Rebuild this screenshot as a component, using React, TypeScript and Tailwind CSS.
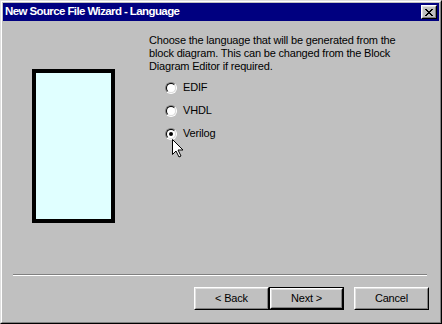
import React from 'react'

function Radio({ label, checked = false }: { label: string; checked?: boolean }) {
    return (
        <div className="flex items-center h-[23px]">
            <span className="w-[12px] h-[12px] rounded-full border border-t-[#808080] border-l-[#808080] border-r-white border-b-white flex">
                <span className="flex-1 rounded-full border border-t-black border-l-black border-r-[#dfdfdf] border-b-[#dfdfdf] bg-white flex items-center justify-center">
                    {checked && <span className="w-[4px] h-[4px] rounded-full bg-black" />}
                </span>
            </span>
            <span className="ml-[6px]">{label}</span>
        </div>
    )
}

function Button({ label, isDefault = false }: { label: string; isDefault?: boolean }) {
    const face = (
        <div className="flex-1 flex border border-t-white border-l-white border-r-black border-b-black">
            <div className="flex-1 flex items-center justify-center border border-t-[#dfdfdf] border-l-[#dfdfdf] border-r-[#808080] border-b-[#808080] bg-[#c0c0c0]">
                {label}
            </div>
        </div>
    )
    if (isDefault) {
        return <div className="w-[75px] h-[23px] flex border border-black">{face}</div>
    }
    return <div className="w-[75px] h-[23px] flex">{face}</div>
}

export default function App() {
    return (
        <div
            className="relative w-[442px] h-[324px] bg-[#c0c0c0] border border-t-[#dfdfdf] border-l-[#dfdfdf] border-r-black border-b-black text-[11px] tracking-[-0.18px] text-black"
            style={{ fontFamily: '"Liberation Sans", Arial, sans-serif' }}
        >
            <div className="h-full flex flex-col border border-t-white border-l-white border-r-[#808080] border-b-[#808080] p-[1px]">
                {/* Title bar */}
                <div className="h-[18px] bg-[#000080] flex items-center justify-between pl-[2px] pr-[2px]">
                    <span className="text-white font-bold text-[11.5px] tracking-[-0.6px] leading-none">New Source File Wizard - Language</span>
                    <div className="w-[16px] h-[14px] flex border border-t-white border-l-white border-r-black border-b-black">
                        <div className="flex-1 flex items-center justify-center border border-t-[#dfdfdf] border-l-[#dfdfdf] border-r-[#808080] border-b-[#808080] bg-[#c0c0c0]">
                            <svg width="8" height="7" viewBox="0 0 8 7">
                                <path d="M0 0h2v1h1v1h2V1h1V0h2v1H7v1H6v1H5v1h1v1h1v1h1v1H6V6H5V5H3v1H2v1H0V6h1V5h1V4h1V3H2V2H1V1H0z" fill="black" />
                            </svg>
                        </div>
                    </div>
                </div>

                {/* Body */}
                <div className="flex-1 flex flex-col">
                    <div className="h-[253px] flex">
                        <div className="ml-[29px] mt-[48px] w-[83px] h-[154px] border-[4px] border-black bg-[#e0ffff]" />
                        <div className="ml-[34px] pt-[13px] leading-[13px]">
                            <p>
                                Choose the language that will be generated from the
                                <br />
                                block diagram. This can be changed from the Block
                                <br />
                                Diagram Editor if required.
                            </p>
                            <div className="ml-[16px] mt-[3px]">
                                <Radio label="EDIF" />
                                <Radio label="VHDL" />
                                <Radio label="Verilog" checked />
                            </div>
                        </div>
                    </div>

                    {/* Separator */}
                    <div className="ml-[10px] w-[414px] border-t border-t-[#808080] border-b border-b-white" />

                    {/* Buttons */}
                    <div className="mt-[11px] flex justify-end pr-[10px]">
                        <Button label="< Back" />
                        <Button label="Next >" isDefault />
                        <div className="w-[10px]" />
                        <Button label="Cancel" />
                    </div>
                </div>
            </div>

            {/* Mouse pointer */}
            <svg className="absolute left-[171px] top-[138px]" width="12" height="19" viewBox="0 0 12 19">
                <path d="M0.5 0.5v15l3.5-3.5 3 6 2-1-3-6h5z" fill="white" stroke="black" strokeWidth="1" />
            </svg>
        </div>
    )
}
